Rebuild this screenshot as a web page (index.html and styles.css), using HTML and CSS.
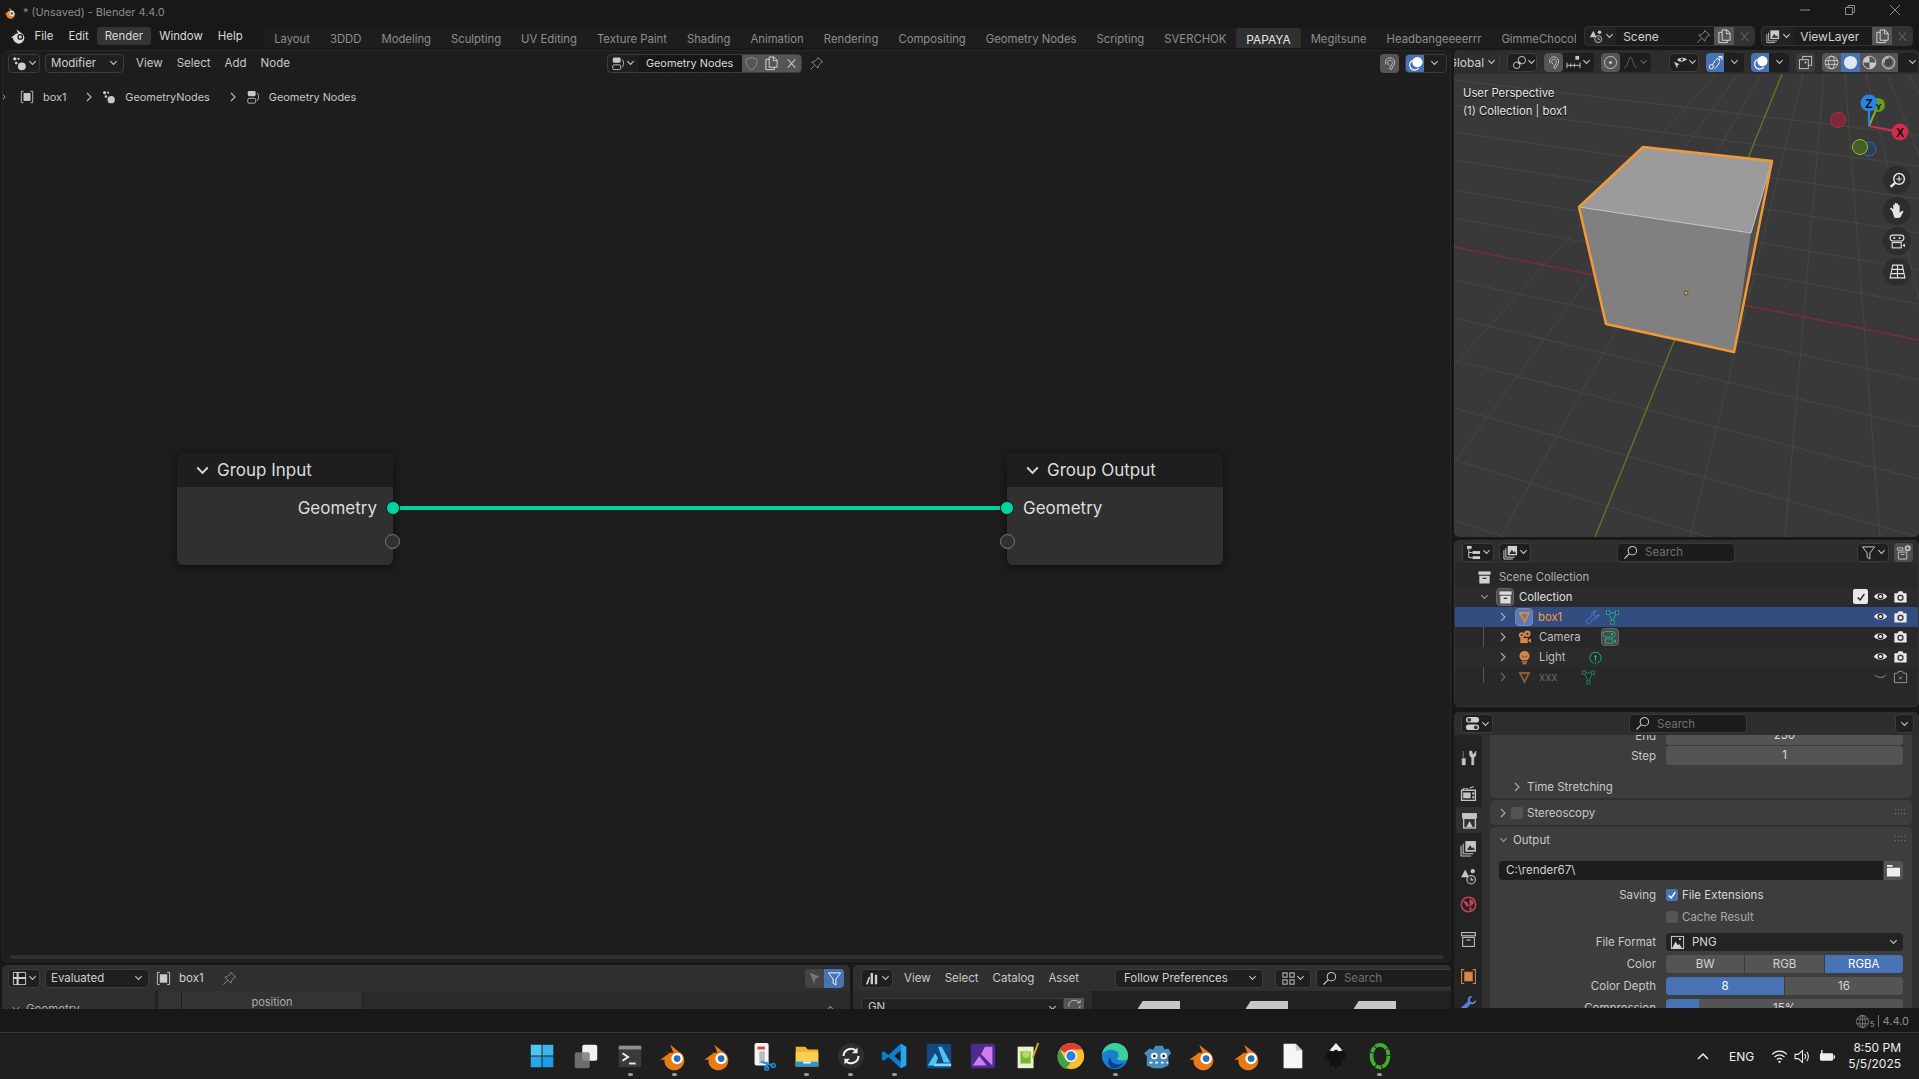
FILE: index.html
```html
<!DOCTYPE html>
<html lang="en">
<head>
<meta charset="utf-8">
<title>Blender 4.4.0</title>
<link rel="stylesheet" href="styles.css">
</head>
<body>
<svg class="sprite" aria-hidden="true">
  <symbol id="chev" viewBox="0 0 10 6"><path d="M1.5 1 5 4.6 8.5 1" fill="none" stroke="currentColor" stroke-width="1.2"/></symbol>
  <symbol id="chevr" viewBox="0 0 6 10"><path d="M1 1 5 5 1 9" fill="none" stroke="currentColor" stroke-width="1.1"/></symbol>
  <symbol id="blender" viewBox="0 0 24 24"><path fill="currentColor" d="M9 3l6.500 5.200A8 8 0 1 1 4.800 18.500 6 6 0 0 1 4.500 15L1 15l7.500-5.500L3.500 9.400 11.500 9.300z"/><circle cx="14.500" cy="14" r="4.600" fill="#fff"/><circle cx="14.500" cy="14" r="2.700" fill="#2a6fb5"/></symbol>
  <symbol id="blendermono" viewBox="0 0 24 24"><path fill="currentColor" d="M9 3l6.500 5.200A8 8 0 1 1 4.800 18.500 6 6 0 0 1 4.500 15L1 15l7.500-5.500L3.500 9.400 11.500 9.300z"/><circle cx="14.500" cy="14" r="4" fill="#181818"/><circle cx="14.500" cy="14" r="2.200" fill="currentColor"/></symbol>
  <symbol id="nodes" viewBox="0 0 16 16"><circle cx="3" cy="3" r="1.800" fill="currentColor"/><circle cx="7" cy="3" r="1.200" fill="currentColor"/><circle cx="4.500" cy="7.500" r="1.500" fill="currentColor"/><circle cx="10.500" cy="11" r="4.200" fill="currentColor"/></symbol>
  <symbol id="object" viewBox="0 0 16 16"><path d="M4 1.500H1.500V14.500H4M12 1.500h2.500V14.500H12" fill="none" stroke="currentColor"/><rect x="4" y="3.500" width="8" height="9" fill="currentColor"/></symbol>
  <symbol id="tree" viewBox="0 0 16 16"><rect x="2" y="1" width="9" height="6" rx="1.500" fill="currentColor"/><rect x="2" y="9.500" width="9" height="5.500" rx="1.500" fill="none" stroke="currentColor"/><path d="M12.500 3.500c2.500 1 2.500 7 0 9" fill="none" stroke="currentColor"/></symbol>
  <symbol id="shield" viewBox="0 0 16 16"><path d="M8 1.500 14 3.500C14 9 12 13 8 15 4 13 2 9 2 3.500z" fill="none" stroke="currentColor"/></symbol>
  <symbol id="copy" viewBox="0 0 16 16"><path d="M5.500 3.500H2v11h9V12M5.500 1h5l3.500 3.500V12H5.500zM10 1v4h4" fill="none" stroke="currentColor"/></symbol>
  <symbol id="x" viewBox="0 0 16 16"><path d="M4 3.500 12 12.500M12 3.500 4 12.500" fill="none" stroke="currentColor" stroke-width="1.100"/></symbol>
  <symbol id="pin" viewBox="0 0 16 16"><path d="M9.500 1.500 14.500 6.500 12.800 7 10 10.500 9.500 13 3 6.500 5.500 6 9 3.200zM5.700 10.300 1.500 14.500" fill="none" stroke="currentColor"/></symbol>
  <symbol id="magnet" viewBox="0 0 16 16"><path d="M4.500 9C2.500 5.500 5 2 8.500 2S14.500 5.500 13 9L10 14.500 8 13.500 10.800 8.500C11.500 6.500 10.500 4.500 8.500 4.500S5.500 6.500 6.500 8.500L7.500 10" fill="none" stroke="currentColor"/></symbol>
  <symbol id="overlay" viewBox="0 0 16 16"><circle cx="10" cy="6.500" r="5.500" fill="currentColor"/><path d="M5 4.500A5.500 5.500 0 1 0 11.500 13" fill="none" stroke="currentColor" stroke-width="1.300"/></symbol>
  <symbol id="link" viewBox="0 0 16 16"><circle cx="10.500" cy="5.500" r="4" fill="none" stroke="currentColor"/><circle cx="5" cy="11" r="3.500" fill="none" stroke="currentColor"/><circle cx="7.800" cy="8.200" r="1.300" fill="currentColor"/></symbol>
  <symbol id="snapgrid" viewBox="0 0 16 16"><rect x="10" y="1" width="4" height="4" fill="currentColor"/><path d="M1 8v6M1 11h14M5 9v4M9 9v4M15 8v6" fill="none" stroke="currentColor"/></symbol>
  <symbol id="prop" viewBox="0 0 16 16"><circle cx="8" cy="8" r="6.500" fill="none" stroke="currentColor"/><circle cx="8" cy="8" r="1.700" fill="currentColor"/></symbol>
  <symbol id="falloff" viewBox="0 0 16 16"><path d="M1 14C5 14 6 2 8 2S11 14 15 14" fill="none" stroke="currentColor"/></symbol>
  <symbol id="viewsel" viewBox="0 0 18 16"><path d="M5 5C7 1.500 13 1.500 17 4 13 7.500 8 8 5 5z" fill="currentColor"/><circle cx="10.500" cy="4.500" r="1.500" fill="#2d2d2d"/><path d="M1 7 8 10 5.500 11 5 15z" fill="currentColor"/></symbol>
  <symbol id="gizmo" viewBox="0 0 16 16"><circle cx="3.500" cy="12.500" r="2.200" fill="none" stroke="currentColor"/><circle cx="12" cy="5" r="1" fill="currentColor"/><path d="M5 10.500C7 6 9 3 14.500 2.500M11 1.500h4v4M7 14.500C9 13 11 11 12.500 7" fill="none" stroke="currentColor"/></symbol>
  <symbol id="xray" viewBox="0 0 16 16"><rect x="5" y="1.500" width="9.500" height="9.500" fill="none" stroke="currentColor"/><rect x="1.500" y="5" width="9.500" height="9.500" fill="#3a3a3a" stroke="currentColor"/><rect x="7" y="7" width="2" height="2" fill="currentColor"/></symbol>
  <symbol id="wire" viewBox="0 0 16 16"><circle cx="8" cy="8" r="6.800" fill="none" stroke="currentColor"/><ellipse cx="8" cy="8" rx="3.200" ry="6.800" fill="none" stroke="currentColor"/><path d="M1.500 6h13M1.500 10h13" stroke="currentColor"/></symbol>
  <symbol id="solid" viewBox="0 0 16 16"><circle cx="8" cy="8" r="7" fill="currentColor"/></symbol>
  <symbol id="mat" viewBox="0 0 16 16"><circle cx="8" cy="8" r="6.800" fill="#555" stroke="currentColor"/><path d="M8 1.200A6.800 6.800 0 0 0 1.200 8H8v6.800A6.800 6.800 0 0 0 14.800 8H8z" fill="currentColor"/></symbol>
  <symbol id="rend" viewBox="0 0 16 16"><circle cx="8" cy="8" r="6.800" fill="#777" stroke="currentColor"/><circle cx="8" cy="8" r="4.200" fill="#444"/><path d="M3 8a5 5 0 0 1 5-5" fill="none" stroke="currentColor" stroke-width="1.500"/></symbol>
  <symbol id="scene" viewBox="0 0 16 16"><path d="M5 1.500 8.500 8.800H1z" fill="currentColor"/><circle cx="12" cy="3" r="2" fill="currentColor"/><circle cx="10.500" cy="11" r="4" fill="#2e2e2e" stroke="currentColor"/><path d="M10.500 9v2.200h2" fill="none" stroke="currentColor"/></symbol>
  <symbol id="layers" viewBox="0 0 16 16"><path d="M1 5.500v9.500h9.500M3 3.500v9.500h9.500" fill="none" stroke="currentColor"/><rect x="5" y="1" width="10" height="10" fill="currentColor"/><path d="M6.500 9.500 9.500 5l2 3 1-1.500 1.500 3z" fill="#2e2e2e"/></symbol>
  <symbol id="outl" viewBox="0 0 16 16"><rect x="1" y="1" width="5" height="3" fill="currentColor"/><rect x="7" y="6.500" width="8" height="3" fill="currentColor"/><rect x="7" y="12" width="8" height="3" fill="currentColor"/><path d="M3 4v9.500h4M3 8h4" fill="none" stroke="currentColor"/></symbol>
  <symbol id="search" viewBox="0 0 16 16"><circle cx="10" cy="6" r="4.500" fill="none" stroke="currentColor" stroke-width="1.100"/><path d="M6.800 9.200 1.500 14.500" stroke="currentColor" stroke-width="1.400"/></symbol>
  <symbol id="filter" viewBox="0 0 16 16"><path d="M1.500 2h13L9.500 8.500V15L6.500 13V8.500z" fill="none" stroke="currentColor"/></symbol>
  <symbol id="newcol" viewBox="0 0 16 16"><path d="M1.500 3h6v2.500h-6zM2.500 7.500h9v7.500h-9z" fill="none" stroke="currentColor"/><path d="M5 10h4" stroke="currentColor"/><circle cx="12.500" cy="3.500" r="3.200" fill="currentColor"/><path d="M12.500 1.800v3.400M10.800 3.500h3.400" stroke="#4a4a4a"/></symbol>
  <symbol id="coll" viewBox="0 0 16 16"><rect x="1.500" y="1.500" width="13" height="3.500" fill="currentColor"/><path d="M2.500 6.200h11V14.500h-11zM6 8.800h4" fill="currentColor" stroke="none"/><rect x="6" y="8.200" width="4" height="1.400" fill="#333"/></symbol>
  <symbol id="collo" viewBox="0 0 16 16"><rect x="1.500" y="1.500" width="13" height="3" fill="none" stroke="currentColor"/><rect x="2.500" y="6" width="11" height="8.500" fill="none" stroke="currentColor"/><path d="M6 8.500h4" stroke="currentColor"/></symbol>
  <symbol id="tri" viewBox="0 0 16 16"><path d="M1.500 2h13L8 15zM5 4.500 8 10.500 11 4.500z" fill="currentColor" fill-rule="evenodd"/></symbol>
  <symbol id="cam" viewBox="0 0 16 16"><circle cx="5" cy="5.500" r="3" fill="currentColor"/><circle cx="11" cy="4" r="3.500" fill="currentColor"/><rect x="3.500" y="8.500" width="8" height="5.500" fill="currentColor"/><path d="M11.500 11 15 9v5z" fill="currentColor"/><circle cx="5" cy="5.500" r="1" fill="#333"/><circle cx="11" cy="4" r="1.200" fill="#333"/></symbol>
  <symbol id="camo" viewBox="0 0 16 16"><rect x="1" y="1.500" width="13" height="6" rx="3" fill="none" stroke="currentColor"/><circle cx="10.500" cy="4.500" r="1.200" fill="currentColor"/><rect x="3.500" y="9.500" width="8" height="4.500" fill="none" stroke="currentColor"/><path d="M12 11.500 15 10v4z" fill="currentColor"/></symbol>
  <symbol id="bulb" viewBox="0 0 16 16"><path d="M8 1a5.500 5.500 0 0 1 3 10H5A5.500 5.500 0 0 1 8 1z" fill="currentColor"/><rect x="5" y="12" width="6" height="1.300" fill="currentColor"/><rect x="6" y="14" width="4" height="1.300" fill="currentColor"/><path d="M5.500 6 7 8M10.500 6 9 8" stroke="#333"/></symbol>
  <symbol id="lighto" viewBox="0 0 16 16"><path d="M6 14A6 6 0 1 1 10 14" fill="none" stroke="currentColor"/><circle cx="8" cy="7" r="1.300" fill="currentColor"/><path d="M8 8v4M8 13.500V15" stroke="currentColor"/></symbol>
  <symbol id="meshdata" viewBox="0 0 16 16"><path d="M3.500 3h9L8 12.500z" fill="none" stroke="currentColor"/><rect x="1.500" y="1" width="3.500" height="3.500" fill="#2a2a2a" stroke="currentColor"/><rect x="11" y="1" width="3.500" height="3.500" fill="#2a2a2a" stroke="currentColor"/><rect x="6.200" y="11.500" width="3.500" height="3.500" fill="#2a2a2a" stroke="currentColor"/></symbol>
  <symbol id="wrench" viewBox="0 0 16 16"><path d="M15 4.500 12 7 9.500 6 9.500 3.500 12 1C8.500 .500 6.500 3 7.500 6L1.500 11.500C0 13 3 16 4.500 14.500L10 8.500C13 9.500 15.500 7.500 15 4.500z" fill="none" stroke="currentColor"/></symbol>
  <symbol id="wrenchf" viewBox="0 0 16 16"><path d="M15 4.500 12 7 9.500 6 9.500 3.500 12 1C8.500 .500 6.500 3 7.500 6L1.500 11.500C0 13 3 16 4.500 14.500L10 8.500C13 9.500 15.500 7.500 15 4.500z" fill="currentColor"/></symbol>
  <symbol id="eye" viewBox="0 0 16 16"><path d="M1 8C4 3.500 12 3.500 15 8 12 12.500 4 12.500 1 8z" fill="currentColor"/><circle cx="8" cy="8" r="3.200" fill="#2a2a2a"/><circle cx="8" cy="8" r="1.700" fill="currentColor"/></symbol>
  <symbol id="eyeoff" viewBox="0 0 16 16"><path d="M2 6C5 10 11 10 14 6" fill="none" stroke="currentColor"/></symbol>
  <symbol id="render" viewBox="0 0 16 16"><path d="M1.500 4.500H5L6 2.500h4l1 2h3.500v10h-13z" fill="currentColor"/><circle cx="8" cy="9.300" r="3.400" fill="#444"/><circle cx="8" cy="9.300" r="1.800" fill="currentColor"/></symbol>
  <symbol id="renderoff" viewBox="0 0 16 16"><path d="M1.500 4.500H5L6 2.500h4l1 2h3.500v10h-13z" fill="none" stroke="currentColor"/><path d="M6.500 8 9.500 11M9.500 8 6.500 11" stroke="currentColor"/></symbol>
  <symbol id="check" viewBox="0 0 12 12"><path d="M2 6.500 5 9.500 10 2.500" fill="none" stroke="currentColor" stroke-width="1.800"/></symbol>
  <symbol id="propsw" viewBox="0 0 16 16"><rect x="1" y="1" width="14" height="6" rx="3" fill="currentColor"/><rect x="1" y="9" width="14" height="6" rx="3" fill="currentColor"/><circle cx="4.500" cy="4" r="2" fill="#333"/><circle cx="11.500" cy="12" r="2" fill="#333"/></symbol>
  <symbol id="tool" viewBox="0 0 16 16"><path d="M3 1v6M2 8h3v6H2zM9 1v3c0 2 1 2.500 2 3v7h2V7c1-.500 2-1 2-3V1L13 4h-1L11 1z" fill="currentColor" stroke="currentColor" stroke-width=".5"/></symbol>
  <symbol id="tabrender" viewBox="0 0 16 16"><path d="M1.500 5h13v9.500h-13z" fill="none" stroke="currentColor" stroke-width="1.300"/><path d="M3 3.500h4V5H3zM9 3 13 1.500" stroke="currentColor"/><rect x="3" y="7" width="7" height="5.500" fill="currentColor"/><rect x="11.500" y="7" width="2" height="2" fill="currentColor"/><rect x="11.500" y="10.500" width="2" height="2" fill="currentColor"/></symbol>
  <symbol id="taboutput" viewBox="0 0 16 16"><rect x="1" y="1" width="14" height="5" fill="currentColor"/><rect x="2.500" y="6" width="11" height="9" fill="none" stroke="currentColor" stroke-width="1.300"/><path d="M5 14 8 8.500 11 14z" fill="currentColor"/></symbol>
  <symbol id="world" viewBox="0 0 16 16"><circle cx="8" cy="8" r="6.800" fill="none" stroke="currentColor" stroke-width="1.400"/><path d="M3 5c3-1 4 1 5 3s-2 3-3 0zM9 2c1 2 4 2 4 4s-3 2-3 4 2 2 2 2l-3 2z" fill="currentColor"/></symbol>
  <symbol id="folder" viewBox="0 0 16 16"><path d="M1 2h6v2H1zM1 5h14v9.500H1z" fill="currentColor"/></symbol>
  <symbol id="image" viewBox="0 0 16 16"><rect x="1.500" y="1.500" width="13" height="13" fill="none" stroke="currentColor"/><path d="M2 14.500 6 7l2.500 4 1.500-1.500 3 5z" fill="currentColor"/><circle cx="10.500" cy="4.500" r="1.200" fill="currentColor"/></symbol>
  <symbol id="sheet" viewBox="0 0 16 16"><path d="M1.500 1.500h13v13h-13z" fill="none" stroke="currentColor"/><path d="M6 1v14M1 7.500h14" stroke="currentColor" stroke-width="2.200"/></symbol>
  <symbol id="arrow" viewBox="0 0 16 16"><path d="M3 1.500 13.500 6 9 8 7.500 13.500z" fill="currentColor"/></symbol>
  <symbol id="asset" viewBox="0 0 16 16"><path d="M1 14 4 6l1.500 1-2.500 7.500zM6 14V2h2.500v12zM10.500 14V4H13v10z" fill="currentColor"/></symbol>
  <symbol id="thumbs" viewBox="0 0 16 16"><rect x="2" y="2" width="4.500" height="4.500" fill="none" stroke="currentColor"/><rect x="9.500" y="2" width="4.500" height="4.500" fill="none" stroke="currentColor"/><rect x="2" y="9.500" width="4.500" height="4.500" fill="none" stroke="currentColor"/><rect x="9.500" y="9.500" width="4.500" height="4.500" fill="none" stroke="currentColor"/></symbol>
  <symbol id="refresh" viewBox="0 0 16 16"><path d="M2 9A6 6 0 0 1 13 5M14 8a6 6 0 0 1-1 3M11 5h3V2" fill="none" stroke="currentColor"/></symbol>
  <symbol id="globe" viewBox="0 0 16 16"><circle cx="8" cy="8" r="6.500" fill="none" stroke="currentColor" stroke-width=".8"/><ellipse cx="8" cy="8" rx="3" ry="6.500" fill="none" stroke="currentColor" stroke-width=".8"/><path d="M2 5.500h12M2 10.500h12M8 1.500v13" stroke="currentColor" stroke-width=".8"/></symbol>
  <symbol id="zoomi" viewBox="0 0 16 16"><circle cx="9.500" cy="6.500" r="5" fill="none" stroke="currentColor" stroke-width="1.400"/><path d="M9.500 4v5M7 6.500h5" stroke="currentColor"/><path d="M6 10 1.500 14" stroke="currentColor" stroke-width="2.400"/></symbol>
  <symbol id="hand" viewBox="0 0 16 16"><path d="M3 8.500 1.500 7c-1-1 0-2 1-1.500L4 7V3c0-1 1.500-1 1.500 0v3.500-5c0-1 1.500-1 1.500 0v5-4.500c0-1 1.500-1 1.500 0V7 3.500c0-1 1.500-1 1.500 0V10l2-1.500c1-.7 2 .3 1.300 1L11 14c-1 1-5 1.500-6 .5z" fill="currentColor"/></symbol>
  <symbol id="navcam" viewBox="0 0 16 16"><rect x="1" y="2" width="13" height="5.500" rx="2.700" fill="none" stroke="currentColor"/><circle cx="5" cy="4.700" r="1" fill="currentColor"/><circle cx="10" cy="4.700" r="1" fill="currentColor"/><rect x="3" y="9" width="8.500" height="5" fill="none" stroke="currentColor"/><path d="M12.500 11.500 15 10v3.500z" fill="currentColor"/></symbol>
  <symbol id="navgrid" viewBox="0 0 16 16"><path d="M3.500 2h9L15 14H1zM8 2v12M2.800 6h10.400M2 10h12" fill="none" stroke="currentColor"/></symbol>
  <symbol id="wifi" viewBox="0 0 16 16"><path d="M1 6c4-4 10-4 14 0M3.300 8.500c3-2.700 6.400-2.700 9.400 0M5.500 10.800c1.700-1.300 3.300-1.300 5 0" fill="none" stroke="currentColor" stroke-width="1.100"/><circle cx="8" cy="13" r="1.100" fill="currentColor"/></symbol>
  <symbol id="vol" viewBox="0 0 16 16"><path d="M1 6h3l4-3.500v11L4 10H1z" fill="none" stroke="currentColor"/><path d="M10 5.500c1.200 1.500 1.200 3.500 0 5M12 3.500c2 2.500 2 6.500 0 9" fill="none" stroke="currentColor"/></symbol>
  <symbol id="batt" viewBox="0 0 18 16"><rect x="1" y="4.500" width="14" height="8" rx="1.500" fill="currentColor"/><rect x="15.500" y="6.800" width="1.500" height="3.400" fill="currentColor"/><path d="M3 1v5" stroke="currentColor" stroke-width="1.500"/></symbol>
  <symbol id="tup" viewBox="0 0 12 8"><path d="M1 7 6 2 11 7" fill="none" stroke="currentColor" stroke-width="1.500"/></symbol>

  <symbol id="t-win" viewBox="0 0 32 32"><rect x="4" y="4" width="11.500" height="11.500" fill="#4ec6f4"/><rect x="16.500" y="4" width="11.500" height="11.500" fill="#3bb5ee"/><rect x="4" y="16.500" width="11.500" height="11.500" fill="#2aa5ea"/><rect x="16.500" y="16.500" width="11.500" height="11.500" fill="#1e9be8"/></symbol>
  <symbol id="t-task" viewBox="0 0 32 32"><rect x="12" y="4" width="16" height="17" rx="2" fill="#f1f1f1"/><rect x="4" y="12" width="16" height="17" rx="2" fill="#7a7a7a" opacity=".85"/></symbol>
  <symbol id="t-term" viewBox="0 0 32 32"><rect x="4" y="5" width="24" height="23" rx="2" fill="#3a3a3a"/><rect x="4" y="5" width="24" height="4" fill="#8f8f8f"/><path d="M8 13l6 4-6 4" fill="none" stroke="#eee" stroke-width="2"/><path d="M15 24h7" stroke="#eee" stroke-width="2"/></symbol>
  <symbol id="t-snip" viewBox="0 0 32 32"><rect x="7" y="2" width="15" height="24" rx="2" fill="#f4f4f4"/><path d="M10 6h8v3h-8z" fill="#e0402f"/><rect x="12" y="11" width="6" height="13" fill="#bbb"/><path d="M14 22l12 4M20 22v7" stroke="#1b8fdc" stroke-width="2"/><circle cx="27" cy="26" r="2" fill="none" stroke="#1b8fdc" stroke-width="1.500"/><circle cx="20" cy="29" r="2" fill="none" stroke="#1b8fdc" stroke-width="1.500"/></symbol>
  <symbol id="t-folder" viewBox="0 0 32 32"><path d="M4 6h10l3 3h11v18H4z" fill="#f2b530"/><rect x="4" y="12" width="24" height="15" fill="#fad054"/><rect x="4" y="22" width="24" height="5" fill="#2196d9"/><rect x="12" y="22" width="8" height="2" fill="#fff"/></symbol>
  <symbol id="t-sync" viewBox="0 0 32 32"><circle cx="16" cy="16" r="14" fill="#2e2e2e"/><path d="M8 16a8 8 0 0 1 14-5M24 16a8 8 0 0 1-14 5" fill="none" stroke="#f0f0f0" stroke-width="2.200"/><path d="M23 7v6h-6M9 25v-6h6" fill="#f0f0f0"/></symbol>
  <symbol id="t-code" viewBox="0 0 32 32"><path d="M22 3 28 6v20l-6 3L9 17l-5 4-2-1.500V12.500L4 11l5 4z" fill="#0a7fd0"/><path d="M22 3 28 6v20l-6 3z" fill="#28a4ee"/><path d="M22 10l-7 6 7 6z" fill="#1e1e1e"/></symbol>
  <symbol id="t-afd" viewBox="0 0 32 32"><rect x="3" y="3" width="26" height="26" rx="2" fill="#134881"/><path d="M15 6h4l9 17H21zM4 26l8-13 3 5-3 8z" fill="#4bc3f3"/><path d="M12 24h17v3H10z" fill="#7adaff"/></symbol>
  <symbol id="t-afp" viewBox="0 0 32 32"><rect x="3" y="3" width="26" height="26" rx="2" fill="#4e2a8c"/><path d="M18 6h8v20L14 14zM5 26l7-10 8 10z" fill="#d07cf0"/></symbol>
  <symbol id="t-npp" viewBox="0 0 32 32"><path d="M6 6h17v23H6z" fill="#e9f3d2"/><path d="M9 11h11v13H9z" fill="#79b82c"/><circle cx="15" cy="14" r="4" fill="#b6d96a"/><path d="M28 2l-6 16" stroke="#d9a521" stroke-width="2"/></symbol>
  <symbol id="t-chrome" viewBox="0 0 32 32"><circle cx="16" cy="16" r="14" fill="#fbc02d"/><path d="M16 2a14 14 0 0 1 12.100 7H16a7 7 0 0 0-6.100 3.500L3.900 9A14 14 0 0 1 16 2z" fill="#e53935"/><path d="M3.900 9 10 19.500A7 7 0 0 0 16 23l-6 6.800A14 14 0 0 1 3.900 9z" fill="#43a047"/><circle cx="16" cy="16" r="6.500" fill="#fff"/><circle cx="16" cy="16" r="5" fill="#2b7de9"/></symbol>
  <symbol id="t-edge" viewBox="0 0 32 32"><circle cx="16" cy="16" r="14" fill="#1a7fd0"/><path d="M2 15C3 6 10 2 16 2c8 0 14 6 14 14 0 3-2 5-5 5-2 0-6 0-7-2 3-2 3-7-2-9C11 8 4 10 2 15z" fill="#3ed09a"/><path d="M11 17c0 5 4 8 8 8 3 0 5-1 7-2-3 4-7 7-12 6-5-1-7-8-3-12z" fill="#0d3f8a"/></symbol>
  <symbol id="t-godot" viewBox="0 0 32 32"><path d="M6 8l4 1 2-4h8l2 4 4-1 3 5-3 3v10l-7 3h-9l-7-3V16l-3-3z" fill="#478cbf"/><circle cx="11" cy="16" r="3.500" fill="#fff"/><circle cx="21" cy="16" r="3.500" fill="#fff"/><circle cx="11" cy="16" r="1.600" fill="#333"/><circle cx="21" cy="16" r="1.600" fill="#333"/><path d="M6 23h20" stroke="#fff" stroke-width="2" stroke-dasharray="3 3"/></symbol>
  <symbol id="t-file" viewBox="0 0 32 32"><path d="M7 3h13l7 7v19H7z" fill="#f6f6f6"/><path d="M20 3v7h7z" fill="#c9c9c9"/></symbol>
  <symbol id="t-ink" viewBox="0 0 32 32"><path d="M16 2 28 15l-4 2 3 3-6 1 1 6-4-1-2 4-3-4-4 1 1-6-7-3z" fill="#111"/><path d="M16 2 23 10l-4 1-3-2-3 2-4-1z" fill="#eee"/></symbol>
  <symbol id="t-ring" viewBox="0 0 32 32"><ellipse cx="16" cy="16" rx="9" ry="12" fill="none" stroke="#3fae2a" stroke-width="4" stroke-dasharray="14 1 6 1"/></symbol>
</svg>

<div class="app">
  <header class="titlebar">
    <svg class="ico-title"><use href="#blender"/></svg>
    <span class="title-text">* (Unsaved) - Blender 4.4.0</span>
    <div class="winctl">
      <svg class="wc" viewBox="0 0 14 14"><path d="M2 7h10" stroke="currentColor"/></svg>
      <svg class="wc" viewBox="0 0 14 14"><path d="M2.500 4.500h7v7h-7zM5 4.500V2.500h6.500v7h-2" fill="none" stroke="currentColor"/></svg>
      <svg class="wc" viewBox="0 0 14 14"><path d="M2 2l10 10M12 2 2 12" stroke="currentColor"/></svg>
    </div>
  </header>

  <div class="topbar">
    <svg class="ico-logo"><use href="#blendermono"/></svg>
    <nav class="mainmenu">
      <span class="mi">File</span><span class="mi">Edit</span><span class="mi mi-on">Render</span><span class="mi">Window</span><span class="mi">Help</span>
    </nav>
    <nav class="tabs">
      <span class="tab">Layout</span><span class="tab">3DDD</span><span class="tab">Modeling</span><span class="tab">Sculpting</span><span class="tab">UV Editing</span><span class="tab">Texture Paint</span><span class="tab">Shading</span><span class="tab">Animation</span><span class="tab">Rendering</span><span class="tab">Compositing</span><span class="tab">Geometry Nodes</span><span class="tab">Scripting</span><span class="tab">SVERCHOK</span><span class="tab tab-on">PAPAYA</span><span class="tab">Megitsune</span><span class="tab">Headbangeeeerrr</span><span class="tab">GimmeChocolate</span>
    </nav>
    <div class="scenegrp scene">
      <span class="sg-ico"><svg class="i14"><use href="#scene"/></svg><svg class="chev"><use href="#chev"/></svg></span>
      <span class="sg-name">Scene<svg class="i14 dim sg-pin"><use href="#pin"/></svg></span>
      <span class="sg-act"><svg class="i14"><use href="#copy"/></svg></span>
      <span class="sg-x"><svg class="i14 dim2"><use href="#x"/></svg></span>
    </div>
    <div class="scenegrp layer">
      <span class="sg-ico"><svg class="i14"><use href="#layers"/></svg><svg class="chev"><use href="#chev"/></svg></span>
      <span class="sg-name">ViewLayer</span>
      <span class="sg-act"><svg class="i14"><use href="#copy"/></svg></span>
      <span class="sg-x"><svg class="i14 dim2"><use href="#x"/></svg></span>
    </div>
  </div>

  <main class="workspace">
    <section class="leftcol">
      <div class="node-editor">
        <div class="hdr ne-hdr">
          <span class="drop drop-ico"><svg class="i14"><use href="#nodes"/></svg><svg class="chev"><use href="#chev"/></svg></span>
          <span class="drop ne-mod">Modifier<svg class="chev"><use href="#chev"/></svg></span>
          <span class="menu ne-menu"><span>View</span><span>Select</span><span>Add</span><span>Node</span></span>
          <div class="dblock">
            <span class="db-ico"><svg class="i14"><use href="#tree"/></svg><svg class="chev"><use href="#chev"/></svg></span>
            <span class="db-name">Geometry Nodes</span>
            <span class="db-act"><svg class="i14 dim"><use href="#shield"/></svg></span>
            <span class="db-act"><svg class="i14"><use href="#copy"/></svg></span>
            <span class="db-act"><svg class="i14"><use href="#x"/></svg></span>
          </div>
          <svg class="i14 dim ne-pin"><use href="#pin"/></svg>
          <div class="ne-right">
            <span class="tgl"><svg class="i14"><use href="#magnet"/></svg></span>
            <span class="ovl"><span class="ovl-on"><svg class="i14"><use href="#overlay"/></svg></span><svg class="chev"><use href="#chev"/></svg></span>
          </div>
        </div>
        <div class="crumbs">
          <svg class="crumb-arrow"><use href="#chevr"/></svg>
          <svg class="i14 crumb-first"><use href="#object"/></svg><span>box1</span>
          <svg class="crumb-sep"><use href="#chevr"/></svg>
          <svg class="i14"><use href="#nodes"/></svg><span>GeometryNodes</span>
          <svg class="crumb-sep"><use href="#chevr"/></svg>
          <svg class="i14"><use href="#tree"/></svg><span>Geometry Nodes</span>
        </div>
        <div class="canvas">
          <div class="link"></div>
          <article class="node node-in">
            <div class="node-head"><svg class="node-chev"><use href="#chev"/></svg>Group Input</div>
            <div class="node-body nb-right">Geometry</div>
            <i class="sock sock-g sock-r"></i><i class="sock sock-e sock-r"></i>
          </article>
          <article class="node node-out">
            <div class="node-head"><svg class="node-chev"><use href="#chev"/></svg>Group Output</div>
            <div class="node-body">Geometry</div>
            <i class="sock sock-g sock-l"></i><i class="sock sock-e sock-l"></i>
          </article>
        </div>
        <div class="ne-scroll"></div>
      </div>
      <div class="bottomrow">
        <div class="sheet">
          <div class="hdr sheet-hdr">
            <span class="drop drop-ico"><svg class="i14"><use href="#sheet"/></svg><svg class="chev"><use href="#chev"/></svg></span>
            <span class="drop sh-eval">Evaluated<svg class="chev"><use href="#chev"/></svg></span>
            <svg class="i14 sh-obj"><use href="#object"/></svg><span class="sh-name">box1</span>
            <svg class="i14 dim sh-pin"><use href="#pin"/></svg>
            <span class="sh-filters"><span class="f-off"><svg class="i14"><use href="#arrow"/></svg></span><span class="f-on"><svg class="i14"><use href="#filter"/></svg></span></span>
          </div>
          <div class="sheet-body">
            <div class="sb-side"><svg class="chev"><use href="#chev"/></svg>Geometry</div>
            <div class="sb-idx"></div>
            <div class="sb-col">position</div>
            <div class="sb-rest"><svg class="chev flip"><use href="#chev"/></svg></div>
          </div>
        </div>
        <div class="assets">
          <div class="hdr as-hdr">
            <span class="drop drop-ico"><svg class="i14"><use href="#asset"/></svg><svg class="chev"><use href="#chev"/></svg></span>
            <span class="menu as-menu"><span>View</span><span>Select</span><span>Catalog</span><span>Asset</span></span>
            <span class="drop as-follow">Follow Preferences<svg class="chev"><use href="#chev"/></svg></span>
            <span class="drop as-thumb"><svg class="i14"><use href="#thumbs"/></svg><svg class="chev"><use href="#chev"/></svg></span>
            <span class="search as-search"><svg class="i14"><use href="#search"/></svg>Search</span>
          </div>
          <div class="as-body">
            <div class="as-side"><span class="as-gn">GN<svg class="chev"><use href="#chev"/></svg></span><span class="as-ref"><svg class="i14"><use href="#refresh"/></svg></span></div>
            <div class="as-grid"><i class="thumb"></i><i class="thumb"></i><i class="thumb"></i></div>
          </div>
        </div>
      </div>
    </section>

    <section class="rightcol">
      <div class="viewport">
        <svg class="scene3d" viewBox="1454 50 465 487" preserveAspectRatio="none">
          <g class="grid">
            <path d="M1454 80 1919 135M1454 105 1919 166M1454 132 1919 199M1454 160 1919 233M1454 190 1919 270M1454 218 1919 304M1454 280 1919 380M1454 318 1919 427M1454 360 1919 479M1454 408 1919 537M1454 460 1919 601M1454 520 1919 675"/>
            <path d="M1300 537 1716 74M1400 537 1738 74M1500 537 1761 74M1690 537 1803 74M1785 537 1824 74M1880 537 1845 74M1975 537 1866 74M2070 537 1887 74M2165 537 1908 74M2260 537 1929 74"/>
          </g>
          <path class="axis-x" d="M1454 247 1919 340"/>
          <path class="axis-y" d="M1595 537 1782 74"/>
          <polygon class="f-right" points="1751,233 1772,161 1734,352"/>
          <polygon class="f-front" points="1579,207 1751,233 1734,352 1606,324"/>
          <polygon class="f-top" points="1643,147 1772,161 1751,233 1579,207"/>
          <path class="edge" d="M1579 207 1751 233 1772 161"/>
          <polygon class="outline" points="1643,147 1772,161 1734,352 1606,324 1579,207"/>
          <circle class="origin" cx="1686" cy="293" r="2"/>
          <path class="gz-x" d="M1869 126 1900 132"/><path class="gz-y" d="M1869 126 1878 105"/><path class="gz-z" d="M1869 126V103"/>
          <circle cx="1878" cy="105" r="7" fill="#6a9a20"/>
          <circle cx="1869" cy="103" r="8.500" fill="#2a84e6"/>
          <circle cx="1900" cy="132" r="8.500" fill="#d6294e"/>
          <circle cx="1838" cy="120" r="7.500" fill="#7a2a3a" stroke="#b52d47"/>
          <circle cx="1869" cy="149" r="7" fill="#2f3f58" stroke="#2f6ab0"/>
          <circle cx="1860" cy="147" r="7.500" fill="#4a5a28" stroke="#86c41c"/>
          <text class="gz-t" x="1869" y="107.500">Z</text>
          <text class="gz-t" x="1900" y="136.500">X</text>
          <text class="gz-t gz-dark" x="1878.500" y="110">Y</text>
        </svg>
        <div class="hdr vp-hdr">
          <span class="drop vp-global"><span class="vp-gl">Global</span><svg class="chev"><use href="#chev"/></svg></span>
          <span class="drop vp-link"><svg class="i14"><use href="#link"/></svg><svg class="chev"><use href="#chev"/></svg></span>
          <span class="vp-snap"><span class="tgl"><svg class="i14"><use href="#magnet"/></svg></span><span class="drop-flat"><svg class="i14"><use href="#snapgrid"/></svg><svg class="chev"><use href="#chev"/></svg></span></span>
          <span class="vp-prop"><span class="tgl"><svg class="i14"><use href="#prop"/></svg></span><span class="drop-flat dim3"><svg class="i14"><use href="#falloff"/></svg><svg class="chev"><use href="#chev"/></svg></span></span>
          <span class="drop vp-view"><svg class="i14"><use href="#viewsel"/></svg><svg class="chev"><use href="#chev"/></svg></span>
          <span class="vp-blue vp-gz"><span class="blue-on"><svg class="i14"><use href="#gizmo"/></svg></span><svg class="chev"><use href="#chev"/></svg></span>
          <span class="vp-blue vp-ov"><span class="blue-on"><svg class="i14"><use href="#overlay"/></svg></span><svg class="chev"><use href="#chev"/></svg></span>
          <span class="tgl vp-x"><svg class="i14"><use href="#xray"/></svg></span>
          <span class="vp-shade"><span class="sh"><svg class="i14"><use href="#wire"/></svg></span><span class="sh sh-on"><svg class="i14"><use href="#solid"/></svg></span><span class="sh"><svg class="i14"><use href="#mat"/></svg></span><span class="sh"><svg class="i14"><use href="#rend"/></svg></span><svg class="chev shade-chev"><use href="#chev"/></svg></span>
        </div>
        <div class="vp-text"><div>User Perspective</div><div>(1) Collection | box1</div></div>
        <div class="vp-nav">
          <span class="nav"><svg class="i16"><use href="#zoomi"/></svg></span>
          <span class="nav"><svg class="i16"><use href="#hand"/></svg></span>
          <span class="nav"><svg class="i16"><use href="#navcam"/></svg></span>
          <span class="nav"><svg class="i16"><use href="#navgrid"/></svg></span>
        </div>
      </div>

      <div class="outliner">
        <div class="hdr ol-hdr">
          <span class="drop drop-ico ol-a"><svg class="i14"><use href="#outl"/></svg><svg class="chev"><use href="#chev"/></svg></span>
          <span class="drop drop-ico ol-b"><svg class="i14"><use href="#layers"/></svg><svg class="chev"><use href="#chev"/></svg></span>
          <span class="search ol-search"><svg class="i14"><use href="#search"/></svg>Search</span>
          <span class="drop drop-ico ol-f"><svg class="i14"><use href="#filter"/></svg><svg class="chev"><use href="#chev"/></svg></span>
          <span class="tgl ol-new"><svg class="i14"><use href="#newcol"/></svg></span>
        </div>
        <div class="ol-list">
          <i class="ol-line"></i>
          <div class="row row-scene"><svg class="i14"><use href="#coll"/></svg><span class="rt-scene">Scene Collection</span></div>
          <div class="row row-alt row-coll"><svg class="rc"><use href="#chev"/></svg><span class="icbox"><svg class="i14"><use href="#coll"/></svg></span><span class="rt-coll">Collection</span>
            <span class="vis"><span class="cb"><svg class="i10"><use href="#check"/></svg></span><svg class="i14"><use href="#eye"/></svg><svg class="i14"><use href="#render"/></svg></span></div>
          <div class="row row-sel row-obj"><svg class="rcr"><use href="#chevr"/></svg><span class="icbox icbox-sel"><svg class="i14 orange"><use href="#tri"/></svg></span><span class="rt rt-sel">box1</span><svg class="i14 blue mw-a"><use href="#wrench"/></svg><svg class="i14 green mw-b"><use href="#meshdata"/></svg>
            <span class="vis"><svg class="i14"><use href="#eye"/></svg><svg class="i14"><use href="#render"/></svg></span></div>
          <div class="row row-obj"><svg class="rcr"><use href="#chevr"/></svg><svg class="i14 orange iobj"><use href="#cam"/></svg><span class="rt">Camera</span><span class="icbox data-box"><svg class="i14 green"><use href="#camo"/></svg></span>
            <span class="vis"><svg class="i14"><use href="#eye"/></svg><svg class="i14"><use href="#render"/></svg></span></div>
          <div class="row row-alt row-obj"><svg class="rcr"><use href="#chevr"/></svg><svg class="i14 orange iobj"><use href="#bulb"/></svg><span class="rt">Light</span><svg class="i14 green lt-d"><use href="#lighto"/></svg>
            <span class="vis"><svg class="i14"><use href="#eye"/></svg><svg class="i14"><use href="#render"/></svg></span></div>
          <div class="row row-obj row-off"><svg class="rcr"><use href="#chevr"/></svg><svg class="i14 orange iobj"><use href="#tri"/></svg><span class="rt">xxx</span><svg class="i14 green xx-d"><use href="#meshdata"/></svg>
            <span class="vis"><svg class="i14"><use href="#eyeoff"/></svg><svg class="i14"><use href="#renderoff"/></svg></span></div>
        </div>
      </div>

      <div class="props">
        <div class="hdr pr-hdr">
          <span class="drop drop-ico pr-a"><svg class="i14"><use href="#propsw"/></svg><svg class="chev"><use href="#chev"/></svg></span>
          <span class="search pr-search"><svg class="i14"><use href="#search"/></svg>Search</span>
          <span class="drop pr-opt"><svg class="chev"><use href="#chev"/></svg></span>
        </div>
        <div class="pr-body">
          <aside class="pr-tabs">
            <svg class="i16 tb1"><use href="#tool"/></svg>
            <svg class="i16 tb2"><use href="#tabrender"/></svg>
            <span class="tb-on"><svg class="i16"><use href="#taboutput"/></svg></span>
            <svg class="i16 tb3"><use href="#layers"/></svg>
            <svg class="i16 tb3"><use href="#scene"/></svg>
            <svg class="i16 tb3 red"><use href="#world"/></svg>
            <svg class="i16 tb4"><use href="#collo"/></svg>
            <svg class="i16 tb5 orange"><use href="#object"/></svg>
            <svg class="i16 tb6 blue"><use href="#wrenchf"/></svg>
          </aside>
          <div class="pr-panels">
            <section class="panel p-frame">
              <div class="frow frow-end"><label>End</label><span class="fld">250</span></div>
              <div class="frow frow-step"><label>Step</label><span class="fld">1</span></div>
              <div class="sub"><svg class="rcr"><use href="#chevr"/></svg>Time Stretching</div>
            </section>
            <section class="panel p-stereo">
              <svg class="rcr"><use href="#chevr"/></svg><span class="cb-off cb-st"></span>Stereoscopy<span class="grip"></span>
            </section>
            <section class="panel p-output">
              <div class="out-head"><svg class="rc"><use href="#chev"/></svg>Output<span class="grip"></span></div>
              <div class="pathrow"><span class="path">C:\render67\</span><span class="pathbtn"><svg class="i14"><use href="#folder"/></svg></span></div>
              <div class="frow fr-save"><label>Saving</label><span class="chk"><span class="cb-on"><svg class="i10"><use href="#check"/></svg></span>File Extensions</span></div>
              <div class="frow fr-cache"><label></label><span class="chk chk-off"><span class="cb-off"></span>Cache Result</span></div>
              <div class="frow fr-fmt"><label>File Format</label><span class="sel"><svg class="i14"><use href="#image"/></svg>PNG<svg class="chev"><use href="#chev"/></svg></span></div>
              <div class="frow fr-col"><label>Color</label><span class="seg"><span>BW</span><span>RGB</span><span class="seg-on">RGBA</span></span></div>
              <div class="frow fr-col"><label>Color Depth</label><span class="seg seg2"><span class="seg-on">8</span><span>16</span></span></div>
              <div class="frow fr-col"><label>Compression</label><span class="slider"><i class="slider-fill"></i><b>15%</b></span></div>
            </section>
          </div>
        </div>
      </div>
    </section>
  </main>

  <footer class="status">
    <svg class="i16 st-globe"><use href="#globe"/></svg><span class="st-n">5</span><i class="st-div"></i><span>4.4.0</span>
  </footer>

  <footer class="taskbar">
    <div class="tb-apps">
      <span class="app-i"><svg class="i28"><use href="#t-win"/></svg></span>
      <span class="app-i"><svg class="i28"><use href="#t-task"/></svg></span>
      <span class="app-i run"><svg class="i28"><use href="#t-term"/></svg></span>
      <span class="app-i run orange2"><svg class="i28"><use href="#blender"/></svg></span>
      <span class="app-i orange2"><svg class="i28"><use href="#blender"/></svg></span>
      <span class="app-i"><svg class="i28"><use href="#t-snip"/></svg></span>
      <span class="app-i run"><svg class="i28"><use href="#t-folder"/></svg></span>
      <span class="app-i run"><svg class="i28"><use href="#t-sync"/></svg></span>
      <span class="app-i run"><svg class="i28"><use href="#t-code"/></svg></span>
      <span class="app-i"><svg class="i28"><use href="#t-afd"/></svg></span>
      <span class="app-i"><svg class="i28"><use href="#t-afp"/></svg></span>
      <span class="app-i"><svg class="i28"><use href="#t-npp"/></svg></span>
      <span class="app-i"><svg class="i28"><use href="#t-chrome"/></svg></span>
      <span class="app-i run"><svg class="i28"><use href="#t-edge"/></svg></span>
      <span class="app-i"><svg class="i28"><use href="#t-godot"/></svg></span>
      <span class="app-i orange2"><svg class="i28"><use href="#blender"/></svg></span>
      <span class="app-i orange2"><svg class="i28"><use href="#blender"/></svg></span>
      <span class="app-i"><svg class="i28"><use href="#t-file"/></svg></span>
      <span class="app-i"><svg class="i28"><use href="#t-ink"/></svg></span>
      <span class="app-i run"><svg class="i28"><use href="#t-ring"/></svg></span>
    </div>
    <div class="tray">
      <svg class="tray-up"><use href="#tup"/></svg>
      <span class="tray-lang">ENG</span>
      <svg class="i16 tray-wifi"><use href="#wifi"/></svg>
      <svg class="i16 tray-vol"><use href="#vol"/></svg>
      <svg class="i16 tray-batt"><use href="#batt"/></svg>
      <div class="clock"><div>8:50 PM</div><div>5/5/2025</div></div>
    </div>
  </footer>
</div>
</body>
</html>
```

FILE: styles.css
```css
* { box-sizing: border-box; }
html, body { margin: 0; padding: 0; height: 100%; overflow: hidden; background: #181818; }
body { font-family: Inter, "Noto Sans", sans-serif; font-size: 11.5px; color: #c8c8c8; }
.sprite { position: absolute; width: 0; height: 0; }
svg { display: block; flex: none; }
.i10 { width: 10px; height: 10px; }
.i14 { width: 15px; height: 15px; }
.i16 { width: 17px; height: 17px; }
.i28 { width: 30px; height: 30px; }
.chev { width: 9px; height: 6px; color: #c4c4c4; }
.dim { color: #8c8c8c; }
.dim2 { color: #666; }
.orange { color: #d3864a; }
.green { color: #19b394; }
.blue { color: #5a82d8; }
.red { color: #c4445a; }

.app { width: 1919px; height: 1079px; display: flex; flex-direction: column; }

.titlebar { height: 24px; display: flex; align-items: center; padding-left: 4px; background: #181818; flex: none; }
.ico-title { width: 13px; height: 13px; color: #ee8a24; }
.title-text { margin-left: 6px; font-size: 10.9px; color: #8b8b8b; }
.winctl { margin-left: auto; display: flex; align-items: center; gap: 31px; padding-right: 17px; color: #8a8a8a; margin-top: -4px; }
.wc { width: 14px; height: 14px; }

.topbar { height: 26px; display: flex; align-items: flex-start; flex: none; background: #181818; position: relative; }
.ico-logo { width: 17px; height: 17px; margin: 3px 0 0 10px; color: #d8d8d8; }
.mainmenu { display: flex; margin-left: 0; margin-top: 3px; }
.mi { height: 18px; line-height: 18px; padding: 0 7.500px; color: #d8d8d8; border-radius: 3px; font-size: 11.4px; }
.mi-on { background: #343434; padding: 0 7.500px; margin: 0 1px; }
.tabs { display: flex; margin-left: 14px; margin-top: 4px; width: 1312px; overflow: hidden; height: 20px; }
.tab { padding: 0 10px; line-height: 23px; color: #8d8d8d; white-space: nowrap; background: #1d1d1d; font-size: 11.3px; }
.tab-on { background: #303030; color: #e6e6e6; border-radius: 3px 3px 0 0; font-size: 11.9px; }
.scenegrp { display: flex; height: 20px; border: 1px solid #333; border-radius: 4px; margin-top: 2px; background: #232323; }
.scene { width: 171px; margin-left: 8px; }
.layer { width: 152px; margin-left: 6px; }
.sg-ico { display: flex; align-items: center; gap: 2px; padding: 0 3px 0 4px; width: 31px; flex: none; }
.sg-ico .i14, .db-ico .i14 { width: 14px; }
.sg-name { flex: 1; display: flex; align-items: center; padding-left: 7px; background: #1c1c1c; color: #d0d0d0; font-size: 12px; }
.sg-pin { margin-left: auto; margin-right: 3px; }
.sg-act { width: 20px; display: flex; align-items: center; justify-content: center; background: #555; color: #dcdcdc; }
.sg-x { width: 20px; display: flex; align-items: center; justify-content: center; background: #333; border-radius: 0 3px 3px 0; }

.workspace { height: 960px; display: flex; flex: none; padding-left: 2px; gap: 3px; }
.leftcol { width: 1449px; flex: none; display: flex; flex-direction: column; gap: 3px; }
.rightcol { width: 465px; flex: none; display: flex; flex-direction: column; gap: 3px; }

.hdr { height: 24px; display: flex; align-items: center; flex: none; }
.drop { height: 19px; display: flex; align-items: center; border: 1px solid #3c3c3c; border-radius: 4px; background: #1f1f1f; color: #cfcfcf; padding: 0 5px; justify-content: space-between; }
.drop-ico { width: 32px; padding: 0 3px; gap: 1px; }
.menu { display: flex; gap: 14px; color: #c8c8c8; }
.tgl { height: 19px; width: 19px; display: flex; align-items: center; justify-content: center; background: #555; border-radius: 4px; color: #c4c4c4; }

.node-editor { height: 912px; flex: none; background: #1d1d1d; border-radius: 5px; border: 1px solid #272727; position: relative; overflow: hidden;
  background-image: radial-gradient(circle at center, #2a2a2a 0, #2a2a2a 1px, transparent 1px); background-size: 30.6px 30px; background-position: 8px 10px; display: flex; flex-direction: column; }
.ne-hdr { padding-left: 5px; background: #1d1d1d; }
.ne-mod { width: 79px; margin-left: 5px; }
.ne-menu { margin-left: 12px; }
.dblock { display: flex; height: 19px; width: 195px; margin-left: 317px; border: 1px solid #3c3c3c; border-radius: 4px; background: #1f1f1f; overflow: hidden; }
.db-ico { display: flex; align-items: center; gap: 1px; width: 31px; padding-left: 3px; flex: none; }
.db-name { width: 103px; flex: none; padding-left: 7px; line-height: 17px; background: #171717; color: #d8d8d8; font-size: 10.9px; }
.db-act { flex: 1; display: flex; align-items: center; justify-content: center; background: #555; color: #d8d8d8; }
.ne-pin { margin-left: 7px; }
.ne-right { margin-left: auto; display: flex; gap: 6px; padding-right: 3px; }
.ovl { width: 42px; height: 19px; display: flex; align-items: center; gap: 6px; border: 1px solid #3c3c3c; border-radius: 4px; background: #1f1f1f; overflow: hidden; }
.ovl-on { width: 18px; height: 19px; background: #4772b3; display: flex; align-items: center; justify-content: center; color: #fff; flex: none; }

.crumbs { height: 26px; margin-top: 9px; display: flex; align-items: center; padding-left: 0; color: #c6c6c6; flex: none; font-size: 10.9px; }
.crumbs .i14 { margin-right: 9px; width: 14px; height: 14px; }
.crumb-arrow { width: 5px; height: 8px; color: #aaa; margin: 0 14px 0 -2px; }
.crumb-first { margin-left: 0; }
.crumb-sep { width: 6px; height: 10px; margin: 0 10px 0 20px; color: #bbb; }
.canvas { flex: 1; position: relative; }

.node { position: absolute; width: 216px; height: 112px; border-radius: 6px; box-shadow: 0 2px 10px rgba(0,0,0,.55); background: #303030; font-size: 17px; color: #dcdcdc; }
.node-in { left: 174px; top: 343px; }
.node-out { left: 1004px; top: 343px; }
.node-head { height: 34px; background: #1e1e1e; border-radius: 6px 6px 0 0; display: flex; align-items: center; padding-left: 18px; gap: 7px; }
.node-chev { width: 15px; height: 9px; color: #dcdcdc; }
.node-body { padding: 9px 16px; line-height: 24px; }
.nb-right { text-align: right; }
.sock { position: absolute; border-radius: 50%; }
.sock-g { top: 48px; width: 14px; height: 14px; background: #00d6a3; border: 1px solid #1a1a1a; }
.sock-e { top: 81px; width: 15px; height: 15px; border: 1.500px solid #7b7b7b; background: #303030; }
.sock-r { right: -7px; }
.sock-l { left: -7px; }
.link { position: absolute; left: 397px; top: 396px; width: 600px; height: 4px; background: #00d09e; }
.ne-scroll { position: absolute; left: 7px; right: 6px; bottom: 2px; height: 4px; background: #303030; border-radius: 2px; }

.bottomrow { flex: 1; display: flex; gap: 3px; overflow: hidden; margin-bottom: 1px; }
.sheet { width: 848px; flex: none; background: #2c2c2c; border-radius: 5px 5px 0 0; overflow: hidden; }
.sheet-hdr { background: #2f2f2f; padding-left: 6px; height: 26px; }
.sh-eval { width: 104px; margin-left: 5px; }
.sh-obj { margin-left: 7px; }
.sh-name { margin-left: 8px; color: #cfcfcf; }
.sh-pin { margin-left: 18px; }
.sh-filters { margin-left: auto; margin-right: 6px; display: flex; border-radius: 4px; overflow: hidden; }
.f-off { width: 19px; height: 19px; background: #444; color: #777; display: flex; align-items: center; justify-content: center; }
.f-on { width: 20px; height: 19px; background: #4772b3; color: #fff; display: flex; align-items: center; justify-content: center; }
.sheet-body { display: flex; height: 19px; background: #2b2b2b; color: #aaa; }
.sb-side { width: 153px; padding: 6px 0 0 10px; display: flex; gap: 6px; align-items: center; height: 30px; flex: none; background: #2f2f2f; }
.sb-side .chev { width: 8px; }
.sb-idx { width: 27px; border-left: 3px solid #222; border-right: 1px solid #1e1e1e; background: #333; flex: none; }
.sb-col { width: 181px; text-align: center; line-height: 22px; font-size: 11px; background: #333; border-right: 1px solid #1e1e1e; flex: none; }
.sb-rest { flex: 1; display: flex; justify-content: flex-end; padding: 14px 15px 0 0; }
.flip { transform: scaleY(-1); color: #888; }

.assets { flex: 1; min-width: 0; background: #2b2b2b; border-radius: 5px 5px 0 0; overflow: hidden; }
.as-hdr { background: #2f2f2f; padding-left: 8px; height: 26px; }
.as-menu { margin-left: 11px; }
.as-follow { width: 148px; margin-left: 36px; padding-left: 8px; }
.as-thumb { margin-left: 12px; }
.search { height: 19px; display: flex; align-items: center; gap: 7px; padding-left: 5px; border: 1px solid #3a3a3a; border-radius: 4px; background: #1d1d1d; color: #6f6f6f; }
.search .i14 { color: #c8c8c8; }
.as-search { flex: 1; margin-left: 5px; border-radius: 4px 0 0 4px; border-right: 0; }
.as-body { display: flex; height: 19px; }
.as-side { width: 239px; flex: none; display: flex; padding: 7px 0 0 8px; }
.as-gn { width: 203px; height: 19px; display: flex; justify-content: space-between; padding: 0 6px; background: #222; border: 1px solid #3a3a3a; border-radius: 4px 0 0 4px; line-height: 19px; align-items: center; }
.as-ref { width: 20px; height: 19px; background: #555; display: flex; justify-content: center; }
.as-grid { flex: 1; background: #212121; display: flex; gap: 63px; padding: 10px 0 0 43px; }
.thumb { width: 45px; height: 12px; background: #c6c6c6; clip-path: polygon(17% 0, 100% 0, 100% 100%, 0 100%); }

.viewport { height: 487px; flex: none; background: #393939; position: relative; overflow: hidden; border-radius: 5px; }
.scene3d { position: absolute; left: 0; top: 0; width: 465px; height: 487px; }
.grid path { stroke: #474747; stroke-width: 1; fill: none; }
.axis-x { stroke: #7d2c3e; stroke-width: 1.400; fill: none; }
.axis-y { stroke: #5a7a22; stroke-width: 1.400; fill: none; }
.f-top { fill: #9b9b9b; }
.f-front { fill: #808080; }
.f-right { fill: #4f4f4f; }
.edge { stroke: #c8c8c8; fill: none; stroke-width: 1; }
.outline { fill: none; stroke: #f09a35; stroke-width: 2.500; stroke-linejoin: round; }
.origin { fill: #f09b38; stroke: #333; stroke-width: .8; }
.gz-x { stroke: #d6294e; stroke-width: 2; }
.gz-y { stroke: #7fb01e; stroke-width: 2; }
.gz-z { stroke: #2a84e6; stroke-width: 2; }
.gz-t { font: bold 12px "Liberation Sans", sans-serif; text-anchor: middle; fill: #111; }
.gz-dark { font-size: 9px; }

.vp-hdr { position: relative; background: #2d2d2d; }
.vp-global { width: 46px; border: 0; background: transparent; padding: 0 3px 0 0; overflow: hidden; border-radius: 0 4px 4px 0; border-right: 1px solid #3c3c3c; flex: none; }
.vp-gl { margin-left: -6px; font-size: 12px; color: #cfcfcf; }
.vp-link { width: 30px; margin-left: 7px; padding: 0 3px 0 4px; }
.vp-snap, .vp-prop { display: flex; width: 50px; height: 19px; margin-left: 7px; border-radius: 4px; background: #1f1f1f; overflow: hidden; }
.drop-flat { flex: 1; display: flex; align-items: center; justify-content: space-between; padding: 0 3px; }
.dim3 { opacity: .4; }
.vp-view { width: 30px; margin-left: 18px; padding: 0 2px 0 3px; }
.vp-blue { height: 19px; display: flex; align-items: center; background: #1f1f1f; border-radius: 4px; overflow: hidden; gap: 6px; }
.blue-on { width: 18px; height: 19px; background: #4772b3; color: #fff; display: flex; align-items: center; justify-content: center; flex: none; }
.vp-gz { width: 38px; margin-left: 7px; }
.vp-ov { width: 38px; margin-left: 7px; }
.vp-x { margin-left: 7px; background: #3c3c3c; }
.vp-shade { display: flex; align-items: center; height: 19px; margin-left: 7px; background: #1f1f1f; border-radius: 4px; overflow: hidden; width: 96px; }
.sh { width: 19px; height: 19px; background: #555; display: flex; align-items: center; justify-content: center; color: #c8c8c8; }
.sh-on { background: #4772b3; color: #dfe7f8; }
.shade-chev { margin-left: 10px; }
.vp-text { position: absolute; left: 9px; top: 34px; color: #e8e8e8; font-size: 11.3px; line-height: 18px; text-shadow: 0 1px 1px #000; }
.vp-nav { position: absolute; right: 8px; top: 116px; display: flex; flex-direction: column; gap: 2.500px; }
.nav { width: 28px; height: 28px; border-radius: 50%; background: #2d2d2d; display: flex; align-items: center; justify-content: center; color: #e4e4e4; }

.outliner { height: 167px; flex: none; background: #282828; border-radius: 5px; overflow: hidden; border: 1px solid #333; }
.ol-hdr { background: #2e2e2e; padding-left: 7px; height: 22px; }
.ol-a { width: 32px; }
.ol-b { width: 32px; margin-left: 5px; }
.ol-search { width: 118px; margin-left: 86px; background: #1c1c1c; }
.ol-f { margin-left: auto; }
.ol-new { margin: 0 5px 0 5px; background: #4c4c4c; }
.ol-list { position: relative; padding-top: 4px; }
.ol-line { position: absolute; left: 28px; top: 46px; width: 1px; height: 74px; background: #555; }
.row { height: 20px; display: flex; align-items: center; position: relative; font-size: 11.3px; color: #bfbfbf; }
.row-alt { background: #2b2b2b; }
.row-scene { padding-left: 22px; gap: 7px; }
.row-scene .i14 { color: #d0d0d0; }
.rt-scene { color: #b0b0b0; }
.row-coll { padding-left: 25px; }
.rc { width: 9px; height: 6px; color: #999; flex: none; }
.rcr { width: 6px; height: 10px; color: #aaa; flex: none; }
.icbox { width: 18px; height: 18px; border-radius: 4px; background: #4f4f4f; border: 1px solid #666; display: flex; align-items: center; justify-content: center; flex: none; }
.row-coll .icbox { margin-left: 7px; color: #dcdcdc; }
.rt-coll { margin-left: 5px; color: #e0e0e0; }
.row-sel { background: #334d80; }
.row-obj { padding-left: 45px; }
.icbox-sel { margin-left: 9px; background: #5a7ab0; border-color: #6b8cc0; }
.iobj { margin-left: 11px; }
.rt { margin-left: 7px; }
.row-sel .rt { margin-left: 5px; }
.rt-sel { color: #f0a030; }
.mw-a { margin-left: 23px; }
.mw-b { margin-left: 5px; }
.data-box { margin-left: 20px; background: #4a4a4a; }
.lt-d { margin-left: 23px; }
.xx-d { margin-left: 23px; }
.row-off { color: #666; }
.row-off .iobj { opacity: .55; }
.row-off .xx-d { opacity: .6; }
.row-off .rcr { opacity: .5; }
.row-off .vis { color: #999; }
.vis { position: absolute; right: 10px; top: 2px; display: flex; gap: 5px; align-items: center; color: #eaeaea; }
.cb { width: 15px; height: 15px; background: #e8e8e8; color: #222; border-radius: 2px; display: flex; align-items: center; justify-content: center; margin-right: 0; }

.props { flex: 1; background: #303030; border-radius: 5px 5px 0 0; overflow: hidden; margin-top: 2px; margin-bottom: 2px; min-height: 0; }
.pr-hdr { background: #2e2e2e; padding-left: 7px; height: 23px; position: relative; z-index: 1; }
.pr-search { width: 118px; margin-left: 136px; background: #1c1c1c; }
.pr-opt { margin-left: auto; margin-right: 5px; width: 19px; padding: 0 4px; }
.pr-body { display: flex; height: 274px; overflow: hidden; }
.pr-tabs { width: 28px; background: #232323; flex: none; display: flex; flex-direction: column; align-items: center; color: #c4c4c4; padding-top: 15px; position: relative; margin-right: 8px; }
.tb2 { margin-top: 18px; }
.tb-on { width: 27px; height: 26px; flex: none; background: #303030; margin: 5px 0 -4px 2px; border-radius: 4px 0 0 4px; display: flex; align-items: center; justify-content: center; }
.tb3 { margin-top: 11px; }
.tb4 { margin-top: 18px; }
.tb5 { margin-top: 20px; }
.tb6 { margin-top: 10px; }
.pr-panels { display: flex; flex-direction: column; gap: 2px; width: 422px; flex: none; }
.panel { background: #3d3d3d; border-radius: 5px; color: #c8c8c8; font-size: 11.5px; position: relative; flex: none; }
.frow { display: grid; grid-template-columns: 166px 237px; column-gap: 10px; margin-left: 0; align-items: center; height: 18px; }
.frow label { text-align: right; }
.fld { height: 19px; background: #545454; border-radius: 4px; text-align: center; line-height: 18px; color: #dcdcdc; }
.p-frame { height: 63px; margin-top: 0; overflow: hidden; border-radius: 0 0 5px 5px; }
.frow-end { margin-top: -9px; height: 19px; }
.frow-step { margin-top: 1px; height: 19px; }
.sub { display: flex; align-items: center; gap: 7px; padding-left: 24px; margin-top: 15px; }
.p-stereo { height: 25px; display: flex; align-items: center; padding-left: 10px; }
.cb-off { width: 12px; height: 12px; background: #545454; border-radius: 2px; display: inline-block; flex: none; }
.cb-st { margin: 0 4px 0 5px; }
.grip { position: absolute; right: 6px; top: 9px; width: 11px; height: 5px; background-image: linear-gradient(90deg, #777 1px, transparent 1px), linear-gradient(90deg, #777 1px, transparent 1px); background-size: 3px 1px; background-position: 0 0, 0 4px; background-repeat: repeat-x; }
.p-output { height: 220px; border-radius: 5px 5px 0 0; }
.out-head { height: 25px; display: flex; align-items: center; padding-left: 9px; gap: 5px; }
.pathrow { display: flex; margin: 9px 9px 0 9px; height: 19px; }
.path { flex: 1; background: #1d1d1d; border-radius: 4px 0 0 4px; padding-left: 7px; line-height: 19px; color: #d0d0d0; }
.pathbtn { width: 19px; background: #545454; margin-left: 1px; display: flex; align-items: center; justify-content: center; border-radius: 0 4px 4px 0; color: #eee; }
.fr-save { margin-top: 6px; }
.fr-cache { margin-top: 4px; }
.fr-fmt { margin-top: 7px; }
.fr-col { margin-top: 4px; }
.chk { display: flex; align-items: center; gap: 4px; color: #d6d6d6; }
.chk-off { color: #a8a8a8; }
.cb-on { width: 12px; height: 12px; background: #4772b3; border-radius: 2px; color: #fff; display: flex; align-items: center; justify-content: center; }
.sel { height: 18px; background: #232323; border-radius: 4px; display: flex; align-items: center; padding: 0 5px 0 4px; gap: 7px; color: #d4d4d4; }
.sel .chev { margin-left: auto; }
.seg { height: 18px; display: grid; grid-template-columns: repeat(3, 1fr); gap: 1px; border-radius: 4px; overflow: hidden; text-align: center; line-height: 18px; }
.seg span { background: #545454; color: #d4d4d4; }
.seg .seg-on { background: #4772b3; color: #fff; }
.seg2 { grid-template-columns: repeat(2, 1fr); }
.slider { height: 18px; background: #545454; border-radius: 4px; position: relative; overflow: hidden; text-align: center; line-height: 18px; color: #dcdcdc; }
.slider-fill { position: absolute; left: 0; top: 0; bottom: 0; width: 33px; background: #4772b3; }
.slider b { position: relative; font-weight: 400; }

.status { height: 22px; flex: none; display: flex; align-items: center; justify-content: flex-end; padding-right: 10px; background: #181818; color: #8c8c8c; font-size: 11px; }
.st-globe { width: 15px; height: 15px; }
.st-n { font-size: 8px; margin: 6px 3px 0 0; }
.st-div { width: 1px; height: 12px; background: #777; margin-right: 4px; }

.taskbar { height: 47px; flex: none; display: flex; align-items: center; position: relative; background: #1f1f1f; border-top: 1px solid #3a3a3a; }
.tb-apps { display: flex; margin-left: 520px; }
.app-i { width: 44.100px; height: 46px; display: flex; align-items: center; justify-content: center; position: relative; }
.orange2 { color: #ea7a16; }
.run::after { content: ""; position: absolute; bottom: 3px; left: 50%; margin-left: -2.500px; width: 5px; height: 3px; border-radius: 2px; background: #9a9a9a; }
.tray { margin-left: auto; display: flex; align-items: center; color: #eee; padding-right: 18px; }
.tray-up { width: 12px; height: 8px; }
.tray-lang { margin-left: 20px; font-size: 12px; }
.tray-wifi { margin-left: 17px; }
.tray-vol { margin-left: 6px; }
.tray-batt { margin-left: 8px; }
.clock { margin-left: 12px; text-align: right; font-size: 12px; line-height: 16px; }
```
